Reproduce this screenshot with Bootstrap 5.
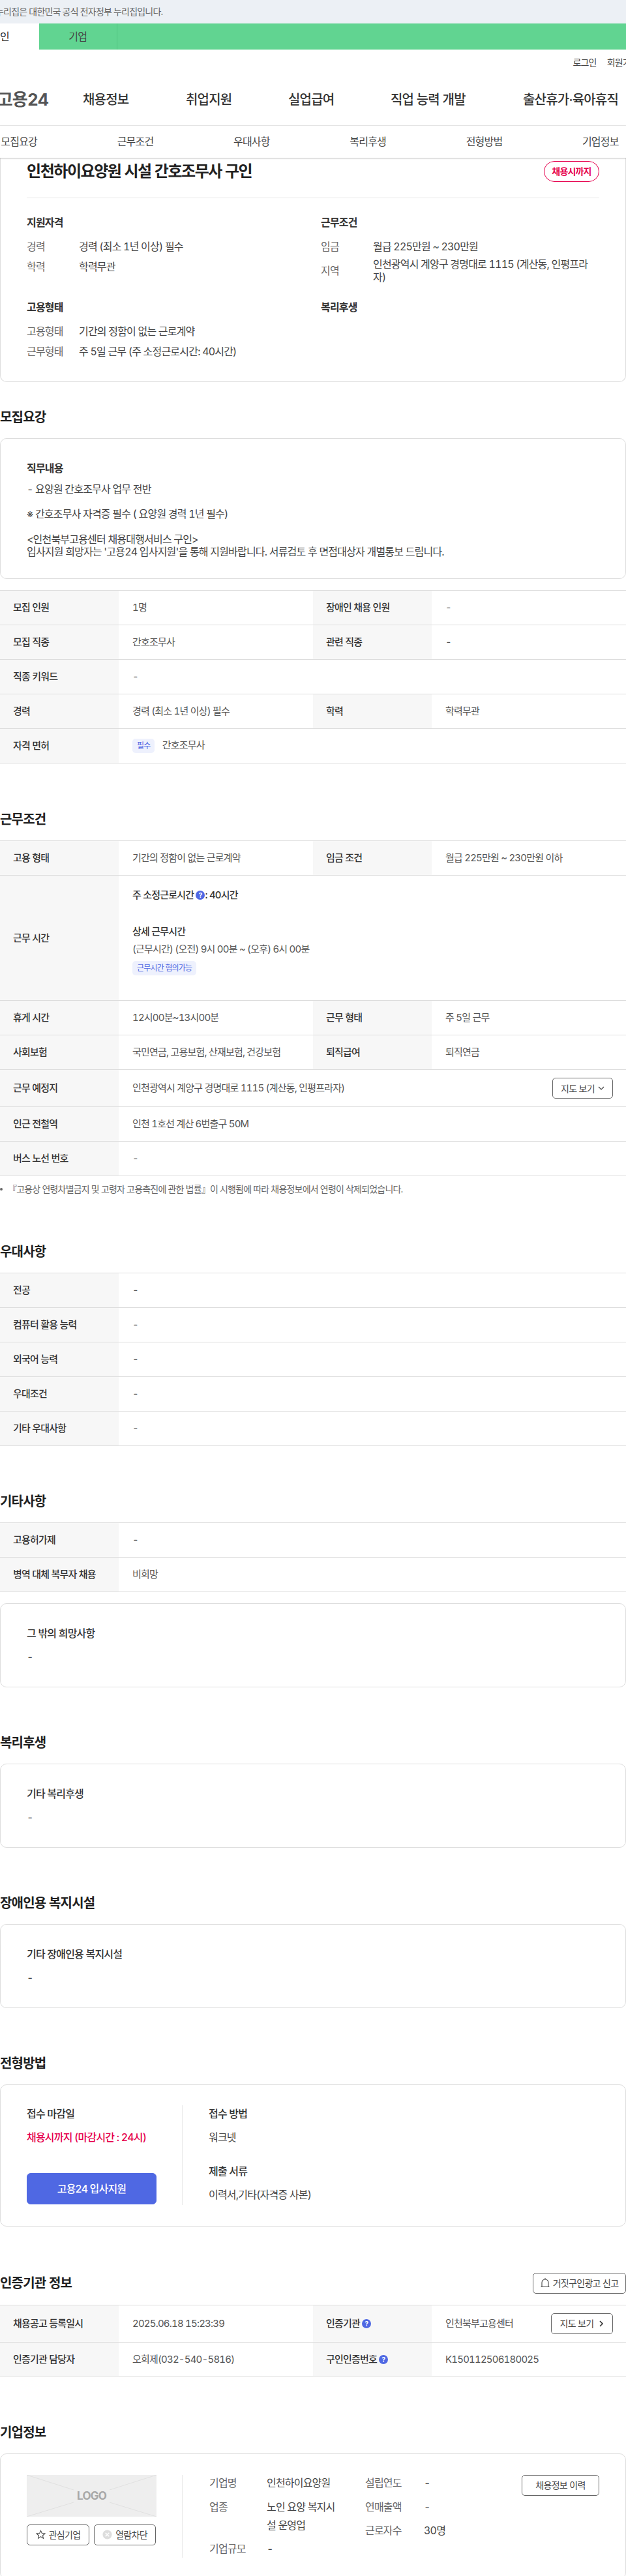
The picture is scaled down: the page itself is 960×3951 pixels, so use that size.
<!DOCTYPE html>
<html lang="ko">
<head>
  <meta charset="UTF-8" />
  <title>채용정보 상세</title>
  <link href="https://cdn.jsdelivr.net/npm/bootstrap@5.3.0/dist/css/bootstrap.min.css" rel="stylesheet" />
  <style>
    html, body { overflow-x: hidden; }
    body { font-family: Inter, "Noto Sans CJK KR", sans-serif; font-variant-numeric: tabular-nums; font-size: 16px; letter-spacing: -0.05em; color: #444; line-height: 20px; background: #fff; }

    /* 상단 */
    .gov-notice { height: 36px; background: #ecf0f5; color: #666; font-size: 14px; line-height: 36px; margin-left: -22px; white-space: nowrap; width: 982px; }
    .user-tabs { height: 40px; background: #61d491; margin-left: -60px; width: 1020px; }
    .user-tab { width: 120px; text-align: center; line-height: 40px; color: #222; }
    .user-tab-on { background: #fff; }
    .user-tab-off { width: 119.5px; color: #444; border-right: 1px solid #52c582; }
    .util-links { height: 40px; font-size: 14px; color: #444; margin-right: -19px; gap: 16px; }
    .gnb { display: grid; grid-template-columns: 127px 158px 157px 157px 203px 1fr; height: 76.5px; align-items: center; border-bottom: 1px solid #e8e8e8; font-size: 20px; font-weight: 500; color: #333; white-space: nowrap; padding-bottom: 1px; }
    .site-logo { font-size: 26px; font-weight: 700; color: #555; display: flex; justify-content: flex-end; padding-right: 53px; }
    .sub-tabs { margin-left: -60px; width: 1070px; height: 49px; }
    .sub-tabs .nav-link { color: #444; padding: 0; line-height: 49px; }
    .sub-bar { box-shadow: 0 1px 2px rgba(0,0,0,.25); position: relative; background: #fff; }

    /* 요약 카드 */
    .summary-box { border: 1px solid #ddd; border-top: 0; border-radius: 0 0 10px 10px; padding: 0 40px 32px 40px; }
    .summary-head { height: 62px; border-bottom: 1px solid #e8e8e8; padding-top: 5px; }
    .summary-head h1 { font-size: 24px; line-height: 32px; font-weight: 700; color: #222; margin: 0; letter-spacing: -0.06em; }
    .due-pill { height: 32px; width: 85px; border: 1px solid #e6004d; border-radius: 16px; color: #e6004d; font-size: 14px; font-weight: 700; text-align: center; line-height: 30px; }
    .summary-grid { display: grid; grid-template-columns: 451px 1fr; padding-top: 25px; row-gap: 24px; }
    .summary-grid h2 { font-size: 16px; line-height: 24px; font-weight: 700; color: #333; margin: 0 0 11px; }
    .info-line { display: flex; align-items: center; min-height: 28px; margin-bottom: 3px; color: #444; }
    .info-line:last-child { margin-bottom: 0; }
    .info-line > span:first-child { width: 80px; flex: none; color: #666; }

    /* 섹션 */
    .sec-title { font-size: 20px; line-height: 30px; font-weight: 700; color: #222; margin: 70.5px 0 17px; }
    .text-box { border: 1px solid #ddd; border-radius: 10px; padding: 35px 40px 36px; }
    .text-box h3 { font-size: 16px; line-height: 20px; font-weight: 700; color: #333; margin: 0 0 15.5px; }
    .text-box p { margin: 0; }
    .plain-title { font-weight: 500 !important; }
    .job-text { line-height: 19.3px; margin-top: -3px !important; }

    /* 표 */
    .job-tbl { table-layout: fixed; width: 960px; margin: 0; font-size: 15px; border-top: 1px solid #ddd; color: #555; --bs-table-color: #555; }
    .job-tbl th, .job-tbl td { padding: 0 0 0 20px; vertical-align: middle; border-bottom: 1px solid #ddd; font-weight: 400; }
    .job-tbl td { padding-left: 21px; }
    .job-tbl th { background: #f7f7f7; font-weight: 500; color: #333; --bs-table-bg: #f7f7f7; }
    .job-tbl tr { height: 53px; }
    .mini-tag { display: inline-block; background: #eef1fd; color: #4f68e3; border-radius: 5px; font-size: 12px; line-height: 22px; padding: 0 7px; }
    .help-dot { display: inline-block; width: 14px; height: 14px; border-radius: 50%; background: #4f68e3; color: #fff; font-size: 10px; line-height: 14px; text-align: center; font-weight: 700; letter-spacing: 0; vertical-align: 1px; }
    .line-btn { display: inline-flex; align-items: center; justify-content: center; gap: 5px; height: 32px; border: 1px solid #666; border-radius: 5px; background: #fff; font-size: 14px; color: #444; letter-spacing: -0.05em; padding: 0; white-space: nowrap; }
    .note-line { font-size: 14px; line-height: 20px; margin-top: 10px; color: #666; }
    .note-line::before { content: ""; display: inline-block; width: 4px; height: 4px; background: #666; border-radius: 50%; vertical-align: 3px; margin-right: 8px; }
    .time-lines b { font-weight: 500; color: #333; }

    /* 전형방법 */
    .apply-box { border: 1px solid #ddd; border-radius: 10px; padding: 31px 40px 32px; display: flex; }
    .apply-left { width: 239px; padding-right: 40px; border-right: 1px solid #e8e8e8; height: 153px; flex: none; }
    .apply-right { padding-left: 40px; }
    .apply-box h4 { font-size: 16px; line-height: 20px; font-weight: 500; color: #333; margin: 3px 0 16px; }
    .apply-box p { margin: 0; line-height: 20px; }
    .apply-go { width: 199px; height: 48px; background: #4f68e3; border-color: #4f68e3; color: #fff; font-size: 16px; letter-spacing: -0.05em; margin-top: 45px; font-weight: 500; }
    .due-text { color: #e6004d; font-weight: 500; }

    /* 기업정보 */
    .corp-box { border: 1px solid #ddd; border-radius: 10px; padding: 32px 40px 0; height: 193px; display: flex; }
    .corp-left { width: 239px; height: 127px; padding-right: 40px; border-right: 1px solid #e8e8e8; flex: none; }
    .logo-holder { display: block; width: 199px; height: 64px; }
    .corp-grid { display: grid; align-content: start; line-height: 28px; row-gap: 8.5px; margin-top: -1.5px; }
    .corp-grid-a { grid-template-columns: 88px 111px; width: 199px; margin-left: 41px; margin-right: 40px; }
    .corp-grid-b { grid-template-columns: 90px 1fr; width: 200px; }
    .corp-k { color: #666; }
  </style>
</head>
<body>

  <div class="gov-notice">이 누리집은 대한민국 공식 전자정부 누리집입니다.</div>
  <div class="user-tabs d-flex">
    <div class="user-tab user-tab-on">개인</div>
    <div class="user-tab user-tab-off">기업</div>
  </div>

  <div class="util-links d-flex justify-content-end align-items-center">
    <span>로그인</span>
    <span>회원가입</span>
  </div>

  <div class="gnb">
    <div class="site-logo"><span>고용24</span></div>
    <div>채용정보</div>
    <div>취업지원</div>
    <div>실업급여</div>
    <div>직업 능력 개발</div>
    <div>출산휴가·육아휴직</div>
  </div>

  <div class="sub-bar">
    <ul class="nav nav-fill sub-tabs">
      <li class="nav-item"><a class="nav-link" href="#">모집요강</a></li>
      <li class="nav-item"><a class="nav-link" href="#">근무조건</a></li>
      <li class="nav-item"><a class="nav-link" href="#">우대사항</a></li>
      <li class="nav-item"><a class="nav-link" href="#">복리후생</a></li>
      <li class="nav-item"><a class="nav-link" href="#">전형방법</a></li>
      <li class="nav-item"><a class="nav-link" href="#">기업정보</a></li>
    </ul>
  </div>

  <div class="summary-box">
    <div class="summary-head d-flex justify-content-between align-items-start">
      <h1>인천하이요양원 시설 간호조무사 구인</h1>
      <div class="due-pill">채용시까지</div>
    </div>
    <div class="summary-grid">
      <div>
        <h2>지원자격</h2>
        <div class="info-line"><span>경력</span><span>경력 (최소 1년 이상) 필수</span></div>
        <div class="info-line"><span>학력</span><span>학력무관</span></div>
      </div>
      <div>
        <h2>근무조건</h2>
        <div class="info-line"><span>임금</span><span>월급 225만원 ~ 230만원</span></div>
        <div class="info-line"><span>지역</span><span>인천광역시 계양구 경명대로 1115 (계산동, 인평프라자)</span></div>
      </div>
      <div>
        <h2>고용형태</h2>
        <div class="info-line"><span>고용형태</span><span>기간의 정함이 없는 근로계약</span></div>
        <div class="info-line"><span>근무형태</span><span>주 5일 근무 (주 소정근로시간: 40시간)</span></div>
      </div>
      <div>
        <h2>복리후생</h2>
      </div>
    </div>
  </div>

  <h2 class="sec-title" style="margin-top:39px">모집요강</h2>
  <div class="text-box" style="padding-bottom:31px">
    <h3 class="mb-3">직무내용</h3>
    <p class="job-text">- 요양원 간호조무사 업무 전반<br><br>※ 간호조무사 자격증 필수 ( 요양원 경력 1년 필수)<br><br>&lt;인천북부고용센터 채용대행서비스 구인&gt;<br>입사지원 희망자는 '고용24 입사지원'을 통해 지원바랍니다. 서류검토 후 면접대상자 개별통보 드립니다.</p>
  </div>

  <table class="table job-tbl" style="margin-top:17px">
    <colgroup><col style="width:182px"><col style="width:298px"><col style="width:182px"><col style="width:298px"></colgroup>
    <tr><th>모집 인원</th><td>1명</td><th>장애인 채용 인원</th><td>-</td></tr>
    <tr><th>모집 직종</th><td>간호조무사</td><th>관련 직종</th><td>-</td></tr>
    <tr><th>직종 키워드</th><td colspan="3">-</td></tr>
    <tr><th>경력</th><td>경력 (최소 1년 이상) 필수</td><th>학력</th><td>학력무관</td></tr>
    <tr><th>자격 면허</th><td colspan="3"><span class="mini-tag me-2">필수</span> 간호조무사</td></tr>
  </table>

  <h2 class="sec-title">근무조건</h2>
  <table class="table job-tbl">
    <colgroup><col style="width:182px"><col style="width:298px"><col style="width:182px"><col style="width:298px"></colgroup>
    <tr><th>고용 형태</th><td>기간의 정함이 없는 근로계약</td><th>임금 조건</th><td>월급 225만원 ~ 230만원 이하</td></tr>
    <tr style="height:192.5px">
      <th>근무 시간</th>
      <td colspan="3" class="time-lines align-top">
        <div class="mt-3 pt-1"><b>주 소정근로시간 <span class="help-dot">?</span>: 40시간</b></div>
        <div style="margin-top:36px"><b>상세 근무시간</b></div>
        <div style="margin-top:7px">(근무시간) (오전) 9시 00분 ~ (오후) 6시 00분</div>
        <div style="margin-top:8px"><span class="mini-tag">근무시간 협의가능</span></div>
      </td>
    </tr>
    <tr><th>휴게 시간</th><td>12시00분~13시00분</td><th>근무 형태</th><td>주 5일 근무</td></tr>
    <tr><th>사회보험</th><td>국민연금, 고용보험, 산재보험, 건강보험</td><th>퇴직급여</th><td>퇴직연금</td></tr>
    <tr style="height:57px">
      <th>근무 예정지</th>
      <td colspan="3">
        <div class="d-flex justify-content-between align-items-center pe-3">
          <span>인천광역시 계양구 경명대로 1115 (계산동, 인평프라자)</span>
          <button class="btn line-btn" style="width:93px;margin-right:4px">지도 보기
            <svg width="10" height="6" viewBox="0 0 10 6" fill="none" stroke="#444" stroke-width="1.2"><path d="M1 1l4 4 4-4"/></svg>
          </button>
        </div>
      </td>
    </tr>
    <tr><th>인근 전철역</th><td colspan="3">인천 1호선 계산 6번출구 50M</td></tr>
    <tr><th>버스 노선 번호</th><td colspan="3">-</td></tr>
  </table>
  <div class="note-line">『고용상 연령차별금지 및 고령자 고용촉진에 관한 법률』이 시행됨에 따라 채용정보에서 연령이 삭제되었습니다.</div>

  <h2 class="sec-title">우대사항</h2>
  <table class="table job-tbl">
    <colgroup><col style="width:182px"><col></colgroup>
    <tr><th>전공</th><td>-</td></tr>
    <tr><th>컴퓨터 활용 능력</th><td>-</td></tr>
    <tr><th>외국어 능력</th><td>-</td></tr>
    <tr><th>우대조건</th><td>-</td></tr>
    <tr><th>기타 우대사항</th><td>-</td></tr>
  </table>

  <h2 class="sec-title">기타사항</h2>
  <table class="table job-tbl">
    <colgroup><col style="width:182px"><col></colgroup>
    <tr><th>고용허가제</th><td>-</td></tr>
    <tr><th>병역 대체 복무자 채용</th><td>비희망</td></tr>
  </table>
  <div class="text-box" style="margin-top:17px">
    <h3 class="plain-title">그 밖의 희망사항</h3>
    <p>-</p>
  </div>

  <h2 class="sec-title">복리후생</h2>
  <div class="text-box">
    <h3 class="plain-title">기타 복리후생</h3>
    <p>-</p>
  </div>

  <h2 class="sec-title">장애인용 복지시설</h2>
  <div class="text-box">
    <h3 class="plain-title">기타 장애인용 복지시설</h3>
    <p>-</p>
  </div>

  <h2 class="sec-title">전형방법</h2>
  <div class="apply-box">
    <div class="apply-left">
      <h4>접수 마감일</h4>
      <p class="due-text">채용시까지 (마감시간 : 24시)</p>
      <button class="btn apply-go">고용24 입사지원</button>
    </div>
    <div class="apply-right">
      <h4>접수 방법</h4>
      <p>워크넷</p>
      <h4 style="margin-top:32px">제출 서류</h4>
      <p>이력서,기타(자격증 사본)</p>
    </div>
  </div>

  <div class="d-flex justify-content-between align-items-center" style="margin:70.5px 0 17px">
    <h2 class="sec-title m-0">인증기관 정보</h2>
    <button class="btn line-btn" style="width:143px">
      <svg width="14" height="15" viewBox="0 0 14 15" fill="none" stroke="#444" stroke-width="1.1"><path d="M2 13.500V7a5 5 0 0 1 10 0v6.500M.5 13.500h13M7 0v2"/></svg>
      거짓구인광고 신고
    </button>
  </div>
  <table class="table job-tbl">
    <colgroup><col style="width:182px"><col style="width:298px"><col style="width:182px"><col style="width:298px"></colgroup>
    <tr style="height:57px">
      <th>채용공고 등록일시</th><td>2025.06.18 15:23:39</td>
      <th>인증기관 <span class="help-dot">?</span></th>
      <td>
        <div class="d-flex justify-content-between align-items-center pe-3">
          <span>인천북부고용센터</span>
          <button class="btn line-btn" style="width:95px;margin-right:4px">지도 보기
            <svg class="ms-1" width="7" height="10" viewBox="0 0 7 10" fill="none" stroke="#333" stroke-width="1.6"><path d="M1 1l4 4-4 4"/></svg>
          </button>
        </div>
      </td>
    </tr>
    <tr style="height:52.5px">
      <th>인증기관 담당자</th><td>오희제(032-540-5816)</td>
      <th>구인인증번호 <span class="help-dot">?</span></th><td>K150112506180025</td>
    </tr>
  </table>

  <h2 class="sec-title">기업정보</h2>
  <div class="corp-box">
    <div class="corp-left">
      <svg class="logo-holder" viewBox="0 0 199 64">
        <rect width="199" height="64" fill="#eee"/>
        <g stroke="#e0e0e0" stroke-width="1"><path d="M0 0l72 23M0 64l72-22M199 0l-72 23M199 64l-72-22"/></g>
        <text x="99.5" y="38" text-anchor="middle" font-family="Inter, sans-serif" font-size="17" font-weight="700" fill="#a8a8a8">LOGO</text>
      </svg>
      <div class="d-flex justify-content-between" style="margin-top:12px">
        <button class="btn line-btn" style="width:96px">
          <svg width="15" height="15" viewBox="0 0 16 16" fill="none" stroke="#444" stroke-width="1.1"><path d="M8 1.500l2 4.400 4.800.5-3.600 3.200 1 4.700L8 11.400l-4.200 2.900 1-4.700L1.200 6.400l4.800-.5z"/></svg>
          관심기업
        </button>
        <button class="btn line-btn" style="width:95px">
          <svg width="15" height="15" viewBox="0 0 16 16"><circle cx="8" cy="8" r="7.500" fill="#ddd"/><path d="M5 5l6 6M11 5l-6 6" stroke="#fff" stroke-width="1.500"/></svg>
          열람차단
        </button>
      </div>
    </div>
    <div class="corp-grid corp-grid-a">
      <div class="corp-k">기업명</div><div>인천하이요양원</div>
      <div class="corp-k">업종</div><div>노인 요양 복지시설 운영업</div>
      <div class="corp-k">기업규모</div><div>-</div>
    </div>
    <div class="corp-grid corp-grid-b">
      <div class="corp-k">설립연도</div><div>-</div>
      <div class="corp-k">연매출액</div><div>-</div>
      <div class="corp-k">근로자수</div><div>30명</div>
    </div>
    <button class="btn line-btn" style="width:119px;flex:none;margin-left:auto">채용정보 이력</button>
  </div>

  <script src="https://cdn.jsdelivr.net/npm/bootstrap@5.3.0/dist/js/bootstrap.bundle.min.js"></script>
</body>
</html>
